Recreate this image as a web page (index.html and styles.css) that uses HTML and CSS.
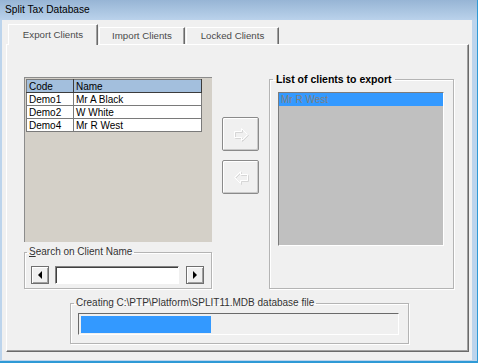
FILE: index.html
```html
<!DOCTYPE html>
<html lang="en">
<head>
  <meta charset="UTF-8" />
  <title>Split Tax Database</title>
  <link rel="stylesheet" href="styles.css">
</head>
<body>

<div class="window">
  <div class="titlebar">Split Tax Database</div>

  <div class="client">
    <div class="tabs">
      <div class="tab active">Export Clients</div>
      <div class="tab">Import Clients</div>
      <div class="tab">Locked Clients</div>
    </div>

    <div class="panel">
      <div class="top-row">
        <div class="left-col">
          <div class="grid">
            <table class="clients">
              <tr><th class="c-code">Code</th><th>Name</th></tr>
              <tr><td>Demo1</td><td>Mr A Black</td></tr>
              <tr><td>Demo2</td><td>W White</td></tr>
              <tr><td>Demo4</td><td>Mr R West</td></tr>
            </table>
          </div>

          <fieldset class="group search">
            <legend><u>S</u>earch on Client Name</legend>
            <div class="search-row">
              <button class="nav-btn"><span class="tri left"></span></button>
              <input class="search-input" type="text">
              <button class="nav-btn"><span class="tri right"></span></button>
            </div>
          </fieldset>
        </div>

        <div class="mid-col">
          <button class="move-btn" disabled>
            <svg width="18" height="15" viewBox="0 0 18 15">
              <path d="M2.5 4.5 H9.5 V1.5 L15.5 7.5 L9.5 13.5 V10.5 H2.5 Z" fill="none" stroke="#d6d6d6" transform="translate(1 1)"/>
              <path d="M2.5 4.5 H9.5 V1.5 L15.5 7.5 L9.5 13.5 V10.5 H2.5 Z" fill="none" stroke="#ffffff"/>
            </svg>
          </button>
          <button class="move-btn" disabled>
            <svg width="18" height="15" viewBox="0 0 18 15">
              <path d="M15.5 4.5 H8.5 V1.5 L2.5 7.5 L8.5 13.5 V10.5 H15.5 Z" fill="none" stroke="#d6d6d6" transform="translate(1 1)"/>
              <path d="M15.5 4.5 H8.5 V1.5 L2.5 7.5 L8.5 13.5 V10.5 H15.5 Z" fill="none" stroke="#ffffff"/>
            </svg>
          </button>
        </div>

        <fieldset class="group export">
          <legend>List of clients to export</legend>
          <div class="export-list">
            <div class="list-item selected">Mr R West</div>
          </div>
        </fieldset>
      </div>

      <fieldset class="group progress">
        <legend>Creating C:\PTP\Platform\SPLIT11.MDB database file</legend>
        <div class="progress-bar">
          <div class="progress-fill" style="width: 41%;"></div>
        </div>
      </fieldset>
    </div>
  </div>
</div>

</body>
</html>
```

FILE: styles.css
```css
body {
  margin: 0;
  font-family: "Liberation Sans", Arial, sans-serif;
  font-size: 10px;
  background-color: #b9d1ea;
}
.window {
  width: 478px;
  height: 363px;
  box-sizing: border-box;
  display: flex;
  flex-direction: column;
  background-color: #bcd4ec;
  border-right: 1px solid #2f9ad6;
  border-bottom: 2px solid #2f9ad6;
  overflow: hidden;
}
.titlebar {
  height: 20px;
  line-height: 20px;
  padding-left: 5px;
  font-size: 10.2px;
  color: #000;
  background: linear-gradient(#97b5d5, #bad2eb);
}
.client {
  margin: 0 5px 1px 2px;
  flex: 1;
  background-color: #f0f0f0;
  display: flex;
  flex-direction: column;
}
.tabs {
  height: 24px;
  display: flex;
  align-items: flex-end;
  padding-left: 6px;
}
.tab {
  height: 17px;
  line-height: 16px;
  box-sizing: border-box;
  text-align: center;
  color: #4a4a4a;
  font-size: 9.7px;
  border-top: 1px solid #ffffff;
  border-left: 1px solid #ffffff;
  border-right: 1px solid #6a6a6a;
  box-shadow: inset -1px 0 #a0a0a0;
  background-color: #f0f0f0;
}
.tab:nth-child(1) { width: 90px; }
.tab:nth-child(2) { width: 86px; margin-left: 1px; }
.tab:nth-child(3) { width: 93px; margin-left: 1px; }
.tab.active {
  height: 21px;
  line-height: 20px;
  margin-bottom: -1px;
  position: relative;
  z-index: 1;
}
.panel {
  margin-left: 4px;
  width: 463px;
  height: 308px;
  box-sizing: border-box;
  border-top: 1px solid #ffffff;
  border-left: 1px solid #ffffff;
  border-right: 1px solid #6a6a6a;
  border-bottom: 1px solid #6a6a6a;
  box-shadow: inset -1px -1px #a0a0a0;
}
.top-row {
  display: flex;
  padding: 28px 0 0 17px;
}
.left-col {
  width: 188px;
  padding-top: 4px;
}
.grid {
  height: 165px;
  box-sizing: border-box;
  background-color: #d4d0c8;
  border-top: 1px solid #8c8c8c;
  border-left: 1px solid #8c8c8c;
  padding: 1px;
}
.clients {
  border-collapse: collapse;
  width: 176px;
  background-color: #ffffff;
  font-size: 10px;
}
.clients th,
.clients td {
  height: 12px;
  padding: 0 2px;
  text-align: left;
  font-weight: normal;
  border: 1px solid #7a7a7a;
  white-space: nowrap;
}
.clients th {
  background-color: #a3bfdd;
  border-bottom: 1px solid #3c3c3c;
  border-right: 1px solid #3c3c3c;
}
.c-code {
  width: 42px;
}
.group {
  margin: 0;
  padding: 0;
  min-width: 0;
  border: 1px solid #b4b4b4;
  box-shadow: inset 1px 1px #ffffff, 1px 1px #ffffff;
}
.group legend {
  padding: 0 2px;
  line-height: 12px;
  color: #333;
}
.search {
  margin-top: 4px;
  height: 43px;
  box-sizing: border-box;
}
.search legend {
  margin-left: 2px;
}
.search-row {
  display: flex;
  gap: 6px;
  padding: 8px 0 0 6px;
}
.nav-btn {
  width: 18px;
  height: 18px;
  padding: 0;
  background-color: #f0f0f0;
  border: 1px solid #6f6f6f;
  box-shadow: inset 1px 1px #ffffff, inset -1px -1px #a0a0a0;
  display: flex;
  align-items: center;
  justify-content: center;
}
.tri {
  width: 0;
  height: 0;
  border-top: 4px solid transparent;
  border-bottom: 4px solid transparent;
}
.tri.left { border-right: 4px solid #000; }
.tri.right { border-left: 4px solid #000; }
.search-input {
  width: 124px;
  height: 18px;
  box-sizing: border-box;
  margin: 0 1px 0 0;
  padding: 0;
  background-color: #ffffff;
  border: 1px solid;
  border-color: #828282 #ffffff #ffffff #828282;
  box-shadow: inset 1px 1px #404040;
}
.mid-col {
  margin-left: 10px;
  width: 37px;
  padding-top: 44px;
  display: flex;
  flex-direction: column;
  gap: 9px;
}
.move-btn {
  width: 37px;
  height: 34px;
  padding: 0;
  background-color: #f0f0f0;
  border: 1px solid #8a8a8a;
  border-radius: 2px;
  box-shadow: inset 1px 1px #ffffff, inset -1px -1px #c9c9c9;
  display: flex;
  align-items: center;
  justify-content: center;
}
.export {
  margin-left: 10px;
  width: 185px;
  height: 216px;
  box-sizing: border-box;
}
.export legend {
  margin-left: 3px;
  padding: 0 3px;
  font-size: 10.5px;
  font-weight: bold;
  color: #000;
}
.export-list {
  margin: 7px 0 0 8px;
  width: 166px;
  height: 154px;
  box-sizing: border-box;
  background-color: #c0c0c0;
  border-top: 1px solid #7c7c7c;
  border-left: 1px solid #7c7c7c;
  border-bottom: 1px solid #ffffff;
  border-right: 1px solid #ffffff;
}
.list-item {
  height: 13px;
  line-height: 13px;
  padding-left: 2px;
  color: #808080;
}
.list-item.selected {
  background-color: #3399ff;
}
.progress {
  margin: 8px 0 0 63px;
  width: 339px;
  height: 47px;
  box-sizing: border-box;
}
.progress legend {
  margin-left: 3px;
}
.progress-bar {
  margin: 4px 0 0 7px;
  width: 321px;
  height: 22px;
  box-sizing: border-box;
  padding: 2px 1px 1px 2px;
  background-color: #f0f0f0;
  border-top: 1px solid #6a6a6a;
  border-left: 1px solid #6a6a6a;
  border-bottom: 1px solid #ffffff;
  border-right: 1px solid #ffffff;
}
.progress-fill {
  height: 100%;
  background-color: #3399ff;
}
```
